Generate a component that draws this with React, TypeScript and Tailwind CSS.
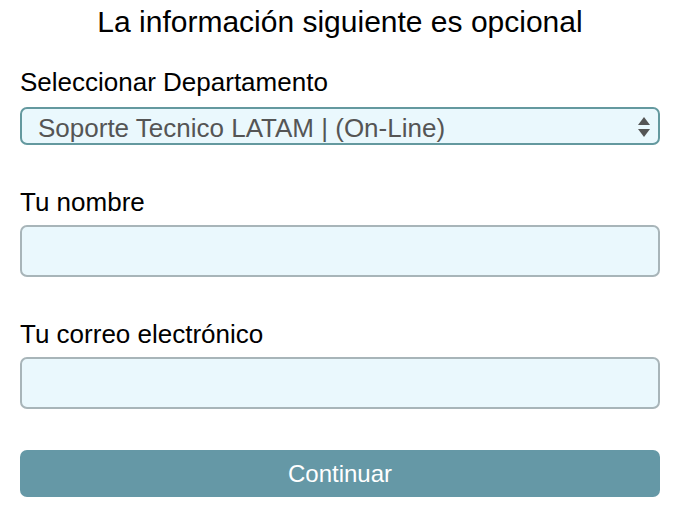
import React from "react";

export default function App() {
  return (
    <div
      className="w-[678px] h-[518px] bg-white pl-[20px] pr-[18px] flex flex-col text-black"
      style={{ fontFamily: '"Liberation Sans", Arial, sans-serif' }}
    >
      <h1 className="text-center text-[30px] leading-[34px] pt-[5px] font-normal">
        La información siguiente es opcional
      </h1>

      <label className="mt-[28px] text-[26px] leading-[30px]">Seleccionar Departamento</label>
      <div className="relative mt-[10px] h-[38px]">
        <select
          className="appearance-none w-full h-full rounded-[7px] border-2 border-[#64999f] bg-[#eaf8fd] pl-[16px] pr-[40px] text-[26px] text-[#555555] outline-none"
          style={{ fontFamily: '"Liberation Sans", Arial, sans-serif' }}
          defaultValue="1"
        >
          <option value="1">Soporte Tecnico LATAM | (On-Line)</option>
        </select>
        <svg
          className="absolute right-[10px] top-[10px] pointer-events-none"
          width="12"
          height="20"
          viewBox="0 0 12 20"
        >
          <polygon points="6,0 12,8 0,8" fill="#555555" />
          <polygon points="0,12 12,12 6,20" fill="#555555" />
        </svg>
      </div>

      <label className="mt-[42px] text-[26px] leading-[30px]">Tu nombre</label>
      <input
        type="text"
        className="mt-[8px] h-[52px] w-full rounded-[7px] border-2 border-[#a8b5b9] bg-[#eaf8fd] px-3 text-[25px] outline-none"
      />

      <label className="mt-[42px] text-[26px] leading-[30px]">Tu correo electrónico</label>
      <input
        type="text"
        className="mt-[8px] h-[52px] w-full rounded-[7px] border-2 border-[#a8b5b9] bg-[#eaf8fd] px-3 text-[25px] outline-none"
      />

      <button
        type="button"
        className="mt-[41px] h-[47px] w-full rounded-[7px] bg-[#6598a6] text-white text-[24px]"
        style={{ fontFamily: '"Liberation Sans", Arial, sans-serif' }}
      >
        Continuar
      </button>
    </div>
  );
}
